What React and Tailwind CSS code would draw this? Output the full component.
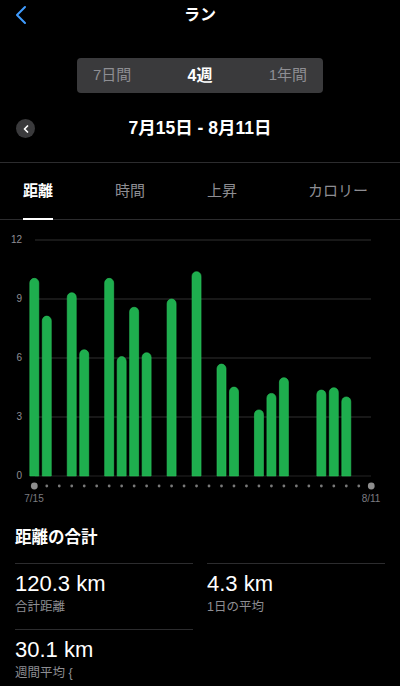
import { ChevronLeft } from "lucide-react";

// days (0..27) that have a run, with distance in km
const runs = [
  [0, 10.05], [1, 8.13], [3, 9.32], [4, 6.42], [6, 10.05], [7, 6.07],
  [8, 8.58], [9, 6.27], [11, 9.0], [13, 10.39], [15, 5.69], [16, 4.52],
  [18, 3.36], [19, 4.2], [20, 5.0], [23, 4.37], [24, 4.49], [25, 4.02],
];

const FONT = '"Liberation Sans", "Noto Sans CJK JP", sans-serif';

const DistanceChart = () => {
  const zeroY = 256;
  const perKm = 236 / 12;
  const dayX = (i) => 34.3 + i * 12.48;
  const w = 9;
  const r = 4.5;

  return (
    <svg width="400" height="290" viewBox="0 0 400 290" className="block">
      {[12, 9, 6, 3, 0].map((v) => {
        const y = zeroY - v * perKm;
        return (
          <g key={v}>
            <line
              x1="35"
              x2="371"
              y1={y}
              y2={y}
              stroke={v === 0 ? "#242424" : "#303030"}
              strokeWidth="1"
            />
            <text
              x="22"
              y={y}
              textAnchor="end"
              dominantBaseline="middle"
              fontSize="10"
              fill="#8e8e93"
              fontFamily={FONT}
            >
              {v}
            </text>
          </g>
        );
      })}

      {runs.map(([day, km]) => {
        const x = dayX(day) - w / 2;
        const top = zeroY - km * perKm;
        return (
          <path
            key={day}
            d={`M${x},${zeroY} L${x},${top + r} A${r},${r} 0 0 1 ${x + w},${top + r} L${x + w},${zeroY} Z`}
            fill="#1eae4e"
            stroke="#2cc45d"
            strokeWidth="0.6"
          />
        );
      })}

      {Array.from({ length: 28 }).map((_, i) => {
        const big = i === 0 || i === 27;
        return (
          <circle
            key={i}
            cx={dayX(i)}
            cy="266"
            r={big ? 3.4 : 1.4}
            fill={big ? "#8e8e8e" : "#7a7a7a"}
          />
        );
      })}

      <text x="34" y="279" textAnchor="middle" dominantBaseline="middle" fontSize="10" fill="#7c7c80" fontFamily={FONT}>
        7/15
      </text>
      <text x="371" y="279" textAnchor="middle" dominantBaseline="middle" fontSize="10" fill="#7c7c80" fontFamily={FONT}>
        8/11
      </text>
    </svg>
  );
};

const Stat = ({ value, label }) => (
  <div className="border-t border-[#2c2c2e] pt-[7px] pb-[14px]">
    <div className="text-[22px] leading-[26px] text-white">{value}</div>
    <div className="mt-[2px] text-[12.5px] leading-[16px] text-[#8e8e93]">{label}</div>
  </div>
);

const App = () => {
  return (
    <div
      className="min-h-screen w-[400px] bg-black text-white overflow-hidden"
      style={{ fontFamily: FONT }}
    >
      {/* Header */}
      <div className="grid grid-cols-[1fr_auto_1fr] items-center h-[29px]">
        <div className="pl-[5px] flex items-center h-[29px]">
          <ChevronLeft size={32} strokeWidth={1.5} color="#409cff" />
        </div>
        <h1 className="text-[16px] font-bold leading-none">ラン</h1>
        <div />
      </div>

      {/* Segmented control */}
      <div className="mt-[29px] mx-auto w-[246px] h-[35px] rounded-[4px] bg-[#3a3a3c] flex items-center justify-between px-4">
        <span className="text-[15px] text-[#8e8e93]">7日間</span>
        <span className="text-[16px] font-bold text-white">4週</span>
        <span className="text-[15px] text-[#8e8e93]">1年間</span>
      </div>

      {/* Date range */}
      <div className="relative mt-[26px] h-[19px] flex items-center justify-center">
        <div className="absolute left-[16px] top-0 w-[19px] h-[19px] rounded-full bg-[#3a3a3c] flex items-center justify-center">
          <ChevronLeft size={12} strokeWidth={3.5} color="#ffffff" />
        </div>
        <span className="text-[17.5px] font-bold leading-none">7月15日 - 8月11日</span>
      </div>

      <div className="mt-[24px] h-px bg-[#2c2c2e]" />

      {/* Tabs */}
      <div className="flex h-[57px] px-[23px] border-b border-[#2c2c2e]">
        <div className="relative h-full flex items-center">
          <span className="text-[15px] font-bold text-white">距離</span>
          <div className="absolute left-0 right-0 bottom-[-1px] h-[2px] bg-white" />
        </div>
        <div className="ml-[62px] h-full flex items-center text-[15px] text-[#8e8e93]">時間</div>
        <div className="ml-[62px] h-full flex items-center text-[15px] text-[#8e8e93]">上昇</div>
        <div className="ml-[71px] h-full flex items-center text-[15px] text-[#8e8e93]">カロリー</div>
      </div>

      {/* Chart */}
      <DistanceChart />

      {/* Summary */}
      <div className="px-[15px]">
        <h2 className="mt-[18px] text-[16.5px] font-bold leading-[18px]">距離の合計</h2>
        <div className="mt-[17px] grid grid-cols-2 gap-x-[14px]">
          <Stat value="120.3 km" label="合計距離" />
          <Stat value="4.3 km" label="1日の平均" />
          <Stat value="30.1 km" label="週間平均 {" />
        </div>
      </div>
    </div>
  );
};

export default App;
